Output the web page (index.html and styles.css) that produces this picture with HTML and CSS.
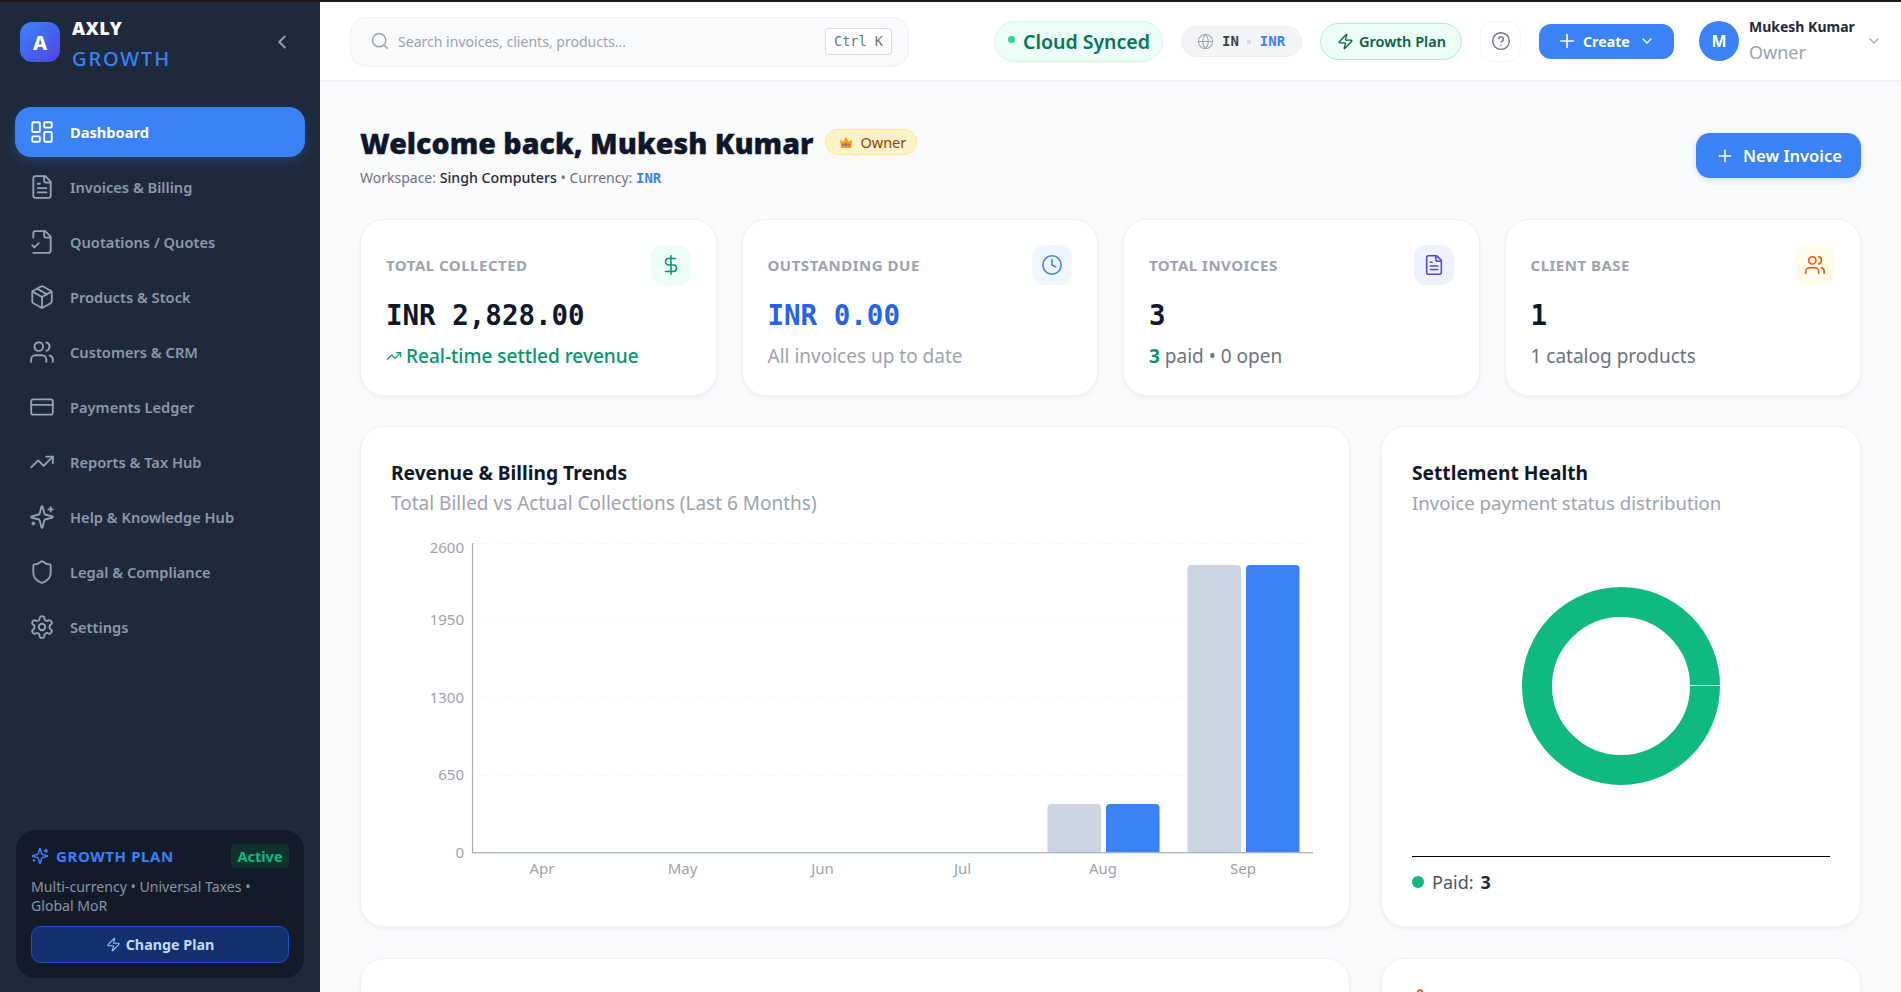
FILE: index.html
```html
<!DOCTYPE html>
<html lang="en">
<head>
<meta charset="utf-8">
<title>Axly Growth Dashboard</title>
<link rel="stylesheet" href="styles.css">
</head>
<body>
<svg class="sprite" aria-hidden="true">
  <symbol id="i-dash" viewBox="0 0 24 24"><rect x="3" y="3" width="7" height="9" rx="1"/><rect x="14" y="3" width="7" height="5" rx="1"/><rect x="14" y="12" width="7" height="9" rx="1"/><rect x="3" y="16" width="7" height="5" rx="1"/></symbol>
  <symbol id="i-file" viewBox="0 0 24 24"><path d="M15 2H6a2 2 0 0 0-2 2v16a2 2 0 0 0 2 2h12a2 2 0 0 0 2-2V7Z"/><path d="M14 2v4a2 2 0 0 0 2 2h4"/><path d="M10 9H8"/><path d="M16 13H8"/><path d="M16 17H8"/></symbol>
  <symbol id="i-filecheck" viewBox="0 0 24 24"><path d="M4 22h14a2 2 0 0 0 2-2V7l-5-5H6a2 2 0 0 0-2 2v4"/><path d="M14 2v4a2 2 0 0 0 2 2h4"/><path d="m3 15 2 2 4-4"/></symbol>
  <symbol id="i-package" viewBox="0 0 24 24"><path d="M11 21.73a2 2 0 0 0 2 0l7-4A2 2 0 0 0 21 16V8a2 2 0 0 0-1-1.73l-7-4a2 2 0 0 0-2 0l-7 4A2 2 0 0 0 3 8v8a2 2 0 0 0 1 1.73z"/><path d="M12 22V12"/><polyline points="3.29 7 12 12 20.71 7"/><path d="m7.5 4.27 9 5.15"/></symbol>
  <symbol id="i-users" viewBox="0 0 24 24"><path d="M16 21v-2a4 4 0 0 0-4-4H6a4 4 0 0 0-4 4v2"/><circle cx="9" cy="7" r="4"/><path d="M22 21v-2a4 4 0 0 0-3-3.87"/><path d="M16 3.13a4 4 0 0 1 0 7.75"/></symbol>
  <symbol id="i-card" viewBox="0 0 24 24"><rect width="20" height="14" x="2" y="5" rx="2"/><line x1="2" x2="22" y1="10" y2="10"/></symbol>
  <symbol id="i-trend" viewBox="0 0 24 24"><polyline points="22 7 13.5 15.5 8.5 10.5 2 17"/><polyline points="16 7 22 7 22 13"/></symbol>
  <symbol id="i-sparkles" viewBox="0 0 24 24"><path d="M9.937 15.5A2 2 0 0 0 8.5 14.063l-6.135-1.582a.5.5 0 0 1 0-.962L8.5 9.936A2 2 0 0 0 9.937 8.5l1.582-6.135a.5.5 0 0 1 .963 0L14.063 8.5A2 2 0 0 0 15.5 9.937l6.135 1.581a.5.5 0 0 1 0 .964L15.5 14.063a2 2 0 0 0-1.437 1.437l-1.582 6.135a.5.5 0 0 1-.963 0z"/><path d="M20 3v4"/><path d="M22 5h-4"/><path d="M4 17v2"/><path d="M5 18H3"/></symbol>
  <symbol id="i-shield" viewBox="0 0 24 24"><path d="M20 13c0 5-3.5 7.5-7.66 8.95a1 1 0 0 1-.67-.01C7.5 20.5 4 18 4 13V6a1 1 0 0 1 1-1c2 0 4.5-1.2 6.24-2.72a1.17 1.17 0 0 1 1.52 0C14.51 3.81 17 5 19 5a1 1 0 0 1 1 1z"/></symbol>
  <symbol id="i-gear" viewBox="0 0 24 24"><path d="M12.22 2h-.44a2 2 0 0 0-2 2v.18a2 2 0 0 1-1 1.73l-.43.25a2 2 0 0 1-2 0l-.15-.08a2 2 0 0 0-2.73.73l-.22.38a2 2 0 0 0 .73 2.73l.15.1a2 2 0 0 1 1 1.72v.51a2 2 0 0 1-1 1.74l-.15.09a2 2 0 0 0-.73 2.73l.22.38a2 2 0 0 0 2.73.73l.15-.08a2 2 0 0 1 2 0l.43.25a2 2 0 0 1 1 1.73V20a2 2 0 0 0 2 2h.44a2 2 0 0 0 2-2v-.18a2 2 0 0 1 1-1.73l.43-.25a2 2 0 0 1 2 0l.15.08a2 2 0 0 0 2.73-.73l.22-.39a2 2 0 0 0-.73-2.73l-.15-.08a2 2 0 0 1-1-1.74v-.5a2 2 0 0 1 1-1.74l.15-.09a2 2 0 0 0 .73-2.73l-.22-.38a2 2 0 0 0-2.73-.73l-.15.08a2 2 0 0 1-2 0l-.43-.25a2 2 0 0 1-1-1.73V4a2 2 0 0 0-2-2z"/><circle cx="12" cy="12" r="3"/></symbol>
  <symbol id="i-zap" viewBox="0 0 24 24"><path d="M4 14a1 1 0 0 1-.78-1.63l9.9-10.2a.5.5 0 0 1 .86.46l-1.92 6.02A1 1 0 0 0 13 10h7a1 1 0 0 1 .78 1.63l-9.9 10.2a.5.5 0 0 1-.86-.46l1.92-6.02A1 1 0 0 0 11 14z"/></symbol>
  <symbol id="i-search" viewBox="0 0 24 24"><circle cx="11" cy="11" r="8"/><path d="m21 21-4.3-4.3"/></symbol>
  <symbol id="i-globe" viewBox="0 0 24 24"><circle cx="12" cy="12" r="10"/><path d="M12 2a14.5 14.5 0 0 0 0 20 14.5 14.5 0 0 0 0-20"/><path d="M2 12h20"/></symbol>
  <symbol id="i-help" viewBox="0 0 24 24"><circle cx="12" cy="12" r="10"/><path d="M9.09 9a3 3 0 0 1 5.83 1c0 2-3 3-3 3"/><path d="M12 17h.01"/></symbol>
  <symbol id="i-plus" viewBox="0 0 24 24"><path d="M5 12h14"/><path d="M12 5v14"/></symbol>
  <symbol id="i-down" viewBox="0 0 24 24"><path d="m6 9 6 6 6-6"/></symbol>
  <symbol id="i-left" viewBox="0 0 24 24"><path d="m15 18-6-6 6-6"/></symbol>
  <symbol id="i-clock" viewBox="0 0 24 24"><circle cx="12" cy="12" r="10"/><polyline points="12 6 12 12 16 14"/></symbol>
  <symbol id="i-dollar" viewBox="0 0 24 24"><line x1="12" x2="12" y1="2" y2="22"/><path d="M17 5H9.5a3.5 3.5 0 0 0 0 7h5a3.5 3.5 0 0 1 0 7H6"/></symbol>
  <symbol id="i-alert" viewBox="0 0 24 24"><path d="m21.73 18-8-14a2 2 0 0 0-3.48 0l-8 14A2 2 0 0 0 4 21h16a2 2 0 0 0 1.73-3"/><path d="M12 9v4"/><path d="M12 17h.01"/></symbol>
</svg>

<div class="strip"></div>
<div class="app">
  <aside class="sidebar">
    <div class="brand">
      <div class="logo">A</div>
      <div class="brand-text">
        <div class="brand-name">AXLY</div>
        <div class="brand-sub">GROWTH</div>
      </div>
      <svg class="ic collapse"><use href="#i-left"/></svg>
    </div>
    <nav class="nav">
      <a class="nav-item active"><svg class="ic nav-ic"><use href="#i-dash"/></svg>Dashboard</a>
      <a class="nav-item"><svg class="ic nav-ic"><use href="#i-file"/></svg>Invoices &amp; Billing</a>
      <a class="nav-item"><svg class="ic nav-ic"><use href="#i-filecheck"/></svg>Quotations / Quotes</a>
      <a class="nav-item"><svg class="ic nav-ic"><use href="#i-package"/></svg>Products &amp; Stock</a>
      <a class="nav-item"><svg class="ic nav-ic"><use href="#i-users"/></svg>Customers &amp; CRM</a>
      <a class="nav-item"><svg class="ic nav-ic"><use href="#i-card"/></svg>Payments Ledger</a>
      <a class="nav-item"><svg class="ic nav-ic"><use href="#i-trend"/></svg>Reports &amp; Tax Hub</a>
      <a class="nav-item"><svg class="ic nav-ic"><use href="#i-sparkles"/></svg>Help &amp; Knowledge Hub</a>
      <a class="nav-item"><svg class="ic nav-ic"><use href="#i-shield"/></svg>Legal &amp; Compliance</a>
      <a class="nav-item"><svg class="ic nav-ic"><use href="#i-gear"/></svg>Settings</a>
    </nav>
    <div class="plan">
      <div class="plan-head">
        <svg class="ic plan-ic"><use href="#i-sparkles"/></svg>
        <span class="plan-title">GROWTH PLAN</span>
        <span class="plan-badge">Active</span>
      </div>
      <p class="plan-desc">Multi-currency • Universal Taxes • Global MoR</p>
      <button class="plan-btn"><svg class="ic plan-btn-ic"><use href="#i-zap"/></svg>Change Plan</button>
    </div>
  </aside>

  <div class="content">
    <header class="topbar">
      <div class="search">
        <svg class="ic search-ic"><use href="#i-search"/></svg>
        <span class="search-text">Search invoices, clients, products...</span>
        <kbd class="kbd">Ctrl K</kbd>
      </div>
      <div class="pill sync"><span class="sync-dot"></span>Cloud Synced</div>
      <div class="pill locale"><svg class="ic locale-ic"><use href="#i-globe"/></svg><span class="locale-in">IN</span><span class="locale-dot"></span><span class="locale-cur">INR</span></div>
      <div class="pill gplan"><svg class="ic gplan-ic"><use href="#i-zap"/></svg>Growth Plan</div>
      <div class="help"><svg class="ic help-ic"><use href="#i-help"/></svg></div>
      <button class="create"><svg class="ic create-plus"><use href="#i-plus"/></svg>Create<svg class="ic create-down"><use href="#i-down"/></svg></button>
      <div class="user">
        <div class="avatar">M</div>
        <div class="user-text">
          <div class="user-name">Mukesh Kumar</div>
          <div class="user-role">Owner</div>
        </div>
        <svg class="ic user-down"><use href="#i-down"/></svg>
      </div>
    </header>

    <main class="main">
      <section class="welcome">
        <div class="welcome-left">
          <div class="welcome-row">
            <h1 class="welcome-title">Welcome back, Mukesh Kumar</h1>
            <span class="owner-badge">
              <svg class="crown" viewBox="0 0 16 16"><path class="crown-base" d="M2 5l3 3 3-5 3 5 3-3-1 9H3z"/><circle class="crown-gem-a" cx="8" cy="10.5" r="1.6"/><circle class="crown-gem-b" cx="4.8" cy="11" r="1"/><circle class="crown-gem-b" cx="11.2" cy="11" r="1"/></svg>
              Owner
            </span>
          </div>
          <p class="welcome-sub">Workspace: <b class="ws">Singh Computers</b> • Currency: <b class="cur">INR</b></p>
        </div>
        <button class="new-invoice"><svg class="ic new-plus"><use href="#i-plus"/></svg>New Invoice</button>
      </section>

      <section class="stats">
        <article class="card stat">
          <div class="stat-top"><span class="stat-label">TOTAL COLLECTED</span><span class="stat-icon tint-green"><svg class="ic"><use href="#i-dollar"/></svg></span></div>
          <div class="stat-value">INR 2,828.00</div>
          <div class="stat-sub green"><svg class="ic trend-ic"><use href="#i-trend"/></svg>Real-time settled revenue</div>
        </article>
        <article class="card stat">
          <div class="stat-top"><span class="stat-label">OUTSTANDING DUE</span><span class="stat-icon tint-blue"><svg class="ic"><use href="#i-clock"/></svg></span></div>
          <div class="stat-value blue">INR 0.00</div>
          <div class="stat-sub muted">All invoices up to date</div>
        </article>
        <article class="card stat">
          <div class="stat-top"><span class="stat-label">TOTAL INVOICES</span><span class="stat-icon tint-indigo"><svg class="ic"><use href="#i-file"/></svg></span></div>
          <div class="stat-value">3</div>
          <div class="stat-sub"><b class="paid-n">3</b> paid • 0 open</div>
        </article>
        <article class="card stat">
          <div class="stat-top"><span class="stat-label">CLIENT BASE</span><span class="stat-icon tint-orange"><svg class="ic"><use href="#i-users"/></svg></span></div>
          <div class="stat-value">1</div>
          <div class="stat-sub">1 catalog products</div>
        </article>
      </section>

      <section class="charts">
        <article class="card panel">
          <h2 class="panel-title">Revenue &amp; Billing Trends</h2>
          <p class="panel-sub">Total Billed vs Actual Collections (Last 6 Months)</p>
          <svg class="chart" viewBox="391 530 930 360">
            <g class="grid">
              <line x1="473" x2="1313" y1="543.5" y2="543.5"/>
              <line x1="473" x2="1313" y1="620.8" y2="620.8"/>
              <line x1="473" x2="1313" y1="698" y2="698"/>
              <line x1="473" x2="1313" y1="775.4" y2="775.4"/>
            </g>
            <g class="ylab">
              <text x="464" y="553">2600</text>
              <text x="464" y="625">1950</text>
              <text x="464" y="703">1300</text>
              <text x="464" y="780">650</text>
              <text x="464" y="858">0</text>
            </g>
            <g class="xlab">
              <text x="542" y="874">Apr</text>
              <text x="682.5" y="874">May</text>
              <text x="822.5" y="874">Jun</text>
              <text x="962.5" y="874">Jul</text>
              <text x="1103" y="874">Aug</text>
              <text x="1243" y="874">Sep</text>
            </g>
            <path class="bar-grey" d="M1047.5 853V808a4 4 0 0 1 4-4H1097a4 4 0 0 1 4 4V853z"/>
            <path class="bar-blue" d="M1106 853V808a4 4 0 0 1 4-4H1155.5a4 4 0 0 1 4 4V853z"/>
            <path class="bar-grey" d="M1187.5 853V569a4 4 0 0 1 4-4H1237a4 4 0 0 1 4 4V853z"/>
            <path class="bar-blue" d="M1246 853V569a4 4 0 0 1 4-4H1295.5a4 4 0 0 1 4 4V853z"/>
            <path class="axis" d="M472.5 543V852.7H1313"/>
          </svg>
        </article>
        <article class="card panel health">
          <h2 class="panel-title">Settlement Health</h2>
          <p class="panel-sub">Invoice payment status distribution</p>
          <div class="donut-wrap">
            <svg class="donut" viewBox="0 0 200 200">
              <circle class="donut-ring" cx="100" cy="100" r="84"/>
              <line class="donut-gap" x1="169" x2="199" y1="99.5" y2="99.5"/>
            </svg>
          </div>
          <div class="legend"><span class="legend-dot"></span>Paid:<b class="legend-n">3</b></div>
        </article>
      </section>

      <section class="charts lower">
        <article class="card panel"></article>
        <article class="card panel"><svg class="ic alert-ic"><use href="#i-alert"/></svg></article>
      </section>
    </main>
  </div>
</div>
</body>
</html>
```

FILE: styles.css
```css
* { box-sizing: border-box; }
html, body { margin: 0; height: 100%; overflow: hidden; }
body { font-family: "Noto Sans", "Open Sans", sans-serif; background: #f8fafc; color: #0f172a; }
.sprite { display: none; }
.ic { display: block; flex: none; width: 24px; height: 24px; fill: none; stroke: currentColor; stroke-width: 2; stroke-linecap: round; stroke-linejoin: round; }
.strip { height: 2px; background: #1c1c1c; }
.app { display: flex; height: 990px; }

/* sidebar */
.sidebar { width: 320px; flex: none; background: #1e293b; display: flex; flex-direction: column; }
.brand { display: flex; align-items: center; height: 80px; padding: 0 27px 0 20px; }
.logo { width: 40px; height: 40px; border-radius: 12px; background: linear-gradient(135deg, #3b82f6, #4f46e5); color: #fff; font-weight: 800; font-size: 20px; display: flex; align-items: center; justify-content: center; }
.brand-text { margin-left: 12px; flex: 1; padding-top: 5px; }
.brand-name { color: #fff; font-size: 18px; font-weight: 900; line-height: 24px; letter-spacing: .6px; }
.brand-sub { color: #3b82f6; font-size: 20px; font-weight: 500; line-height: 28px; letter-spacing: 1.9px; margin-top: 5px; }
.collapse { width: 22px; height: 22px; color: #94a3b8; }
.nav { padding: 25px 15px 0; display: flex; flex-direction: column; gap: 5px; }
.nav-item { height: 50px; display: flex; align-items: center; gap: 15px; padding-left: 14px; color: #8d99ab; font-size: 14.65px; font-weight: 600; border-radius: 16px; }
.nav-ic { width: 26px; height: 26px; stroke-width: 1.7; color: #94a3b8; }
.active { background: #3b82f6; color: #fff; box-shadow: 0 4px 12px rgba(59, 130, 246, .25); font-weight: 700; }
.active .nav-ic { color: #fff; }
.plan { margin: auto 16px 14px; height: 148px; background: #131b2b; border-radius: 20px; padding: 14px 15px 0; }
.plan-head { display: flex; align-items: center; height: 24px; }
.plan-ic { width: 18px; height: 18px; color: #3b82f6; }
.plan-title { margin-left: 7px; flex: 1; color: #3b82f6; font-size: 15px; font-weight: 700; letter-spacing: .6px; }
.plan-badge { height: 24px; width: 58px; background: #10322f; color: #10b981; font-size: 14.5px; font-weight: 700; border-radius: 4px; display: flex; align-items: center; justify-content: center; }
.plan-desc { margin: 9px 0 0; color: #8a94a4; font-size: 14.1px; line-height: 19px; }
.plan-btn { margin-top: 11px; width: 100%; height: 37px; background: #14306e; border: 1px solid #1d4ed8; border-radius: 10px; color: #bfdbfe; font: 700 14.3px "Noto Sans", sans-serif; display: flex; align-items: center; justify-content: center; gap: 5px; padding: 0; }
.plan-btn-ic { width: 15px; height: 15px; stroke-width: 1.8; color: #93c5fd; }

/* topbar */
.content { flex: 1; min-width: 0; display: flex; flex-direction: column; }
.topbar { height: 80px; flex: none; background: #fff; border-bottom: 2px solid #eef0f3; display: flex; align-items: center; padding: 0 19px 0 30px; }
.search { width: 560px; height: 49px; background: #f8fafc; border: 1px solid #eef1f5; border-radius: 16px; box-shadow: 0 1px 2px rgba(0, 0, 0, .04); display: flex; align-items: center; padding: 0 16px 0 19px; margin-right: 85px; }
.search-ic { width: 20px; height: 20px; color: #9ca3af; stroke-width: 1.8; }
.search-text { margin-left: 8px; flex: 1; color: #9ca3af; font-size: 14.05px; }
.kbd { width: 67px; height: 27px; background: #fff; border: 1px solid #d8dce2; border-radius: 4px; font: 13.5px "DejaVu Sans Mono", monospace; color: #6b7280; display: flex; align-items: center; justify-content: center; }
.pill { display: flex; align-items: center; border-radius: 999px; flex: none; }
.sync { width: 169px; height: 41px; background: #ecfdf5; border: 1px solid #d1fae5; color: #047857; font-size: 19.5px; font-weight: 600; padding-left: 13px; margin-right: 18px; }
.sync-dot { width: 7px; height: 7px; border-radius: 50%; background: #34d399; margin-right: 8px; margin-top: -3px; }
.locale { width: 121px; height: 31px; background: #f3f4f6; border: 1px solid #eceef1; padding-left: 15px; font: 700 14px "DejaVu Sans Mono", monospace; margin-right: 18px; }
.locale-ic { width: 17px; height: 17px; stroke-width: 1.5; color: #9ca3af; }
.locale-in { margin-left: 8px; color: #374151; }
.locale-dot { width: 4px; height: 4px; background: #d8dbe0; margin: 1px 9px 0 8px; }
.locale-cur { color: #3b82f6; }
.gplan { width: 142px; height: 37px; background: #ecfdf5; border: 1px solid #a7f3d0; color: #065f46; font-size: 14.5px; font-weight: 600; padding-left: 16px; gap: 5px; margin-right: 18px; }
.gplan-ic { width: 17px; height: 17px; stroke-width: 1.8; }
.help { width: 41px; height: 41px; background: #fff; border: 1px solid #f3f4f6; border-radius: 14px; display: flex; align-items: center; justify-content: center; color: #6b7280; margin-right: 18px; flex: none; }
.help-ic { width: 20px; height: 20px; stroke-width: 1.7; }
.create { width: 135px; height: 35px; background: #3b82f6; border: 0; border-radius: 12px; color: #fff; font: 700 14.2px "Noto Sans", sans-serif; display: flex; align-items: center; padding: 0 0 0 17px; margin-right: 25px; flex: none; }
.create-plus { width: 22px; height: 22px; margin-right: 5px; stroke-width: 1.8; }
.create-down { width: 16px; height: 16px; margin-left: 9px; stroke-width: 1.8; }
.user { display: flex; align-items: center; flex: none; }
.avatar { width: 40px; height: 40px; border-radius: 50%; background: #3b82f6; color: #fff; font-weight: 700; font-size: 16px; display: flex; align-items: center; justify-content: center; }
.user-text { margin-left: 10px; width: 116px; }
.user-name { font-size: 14px; font-weight: 700; color: #1f2937; line-height: 20px; margin-top: -1px; }
.user-role { font-size: 18px; color: #9ca3af; line-height: 26px; margin-top: 2px; }
.user-down { width: 16px; height: 16px; color: #9ca3af; margin-left: 1px; stroke-width: 1.8; }

/* main */
.main { flex: 1; min-height: 0; overflow: hidden; padding: 46px 40px 0; }
.welcome { display: flex; justify-content: space-between; height: 91px; }
.welcome-row { display: flex; align-items: center; gap: 12px; height: 32px; margin-top: -1px; }
.welcome-title { margin: 0; font-size: 28.6px; font-weight: 900; line-height: 32px; white-space: nowrap; -webkit-text-stroke: .3px #0f172a; }
.owner-badge { height: 26px; padding: 0 10px 0 12px; background: #fef3c7; border: 1px solid #fde68a; border-radius: 999px; color: #92400e; font-size: 14.5px; display: flex; align-items: center; gap: 6px; margin-top: -2px; }
.crown { width: 16px; height: 16px; }
.crown-base { fill: #f59e0b; }
.crown-gem-a { fill: #6366f1; }
.crown-gem-b { fill: #ef4444; }
.welcome-sub { margin: 9px 0 0; font-size: 14px; color: #6b7280; line-height: 20px; }
.ws { font-weight: 500; font-size: 14.2px; color: #1e293b; }
.cur { font: 700 14px "DejaVu Sans Mono", monospace; color: #3b82f6; }
.new-invoice { width: 165px; height: 45px; margin-top: 5px; background: #3b82f6; border: 0; border-radius: 14px; color: #fff; font: 600 16.5px "Noto Sans", sans-serif; display: flex; align-items: center; padding: 0 0 0 19px; gap: 8px; box-shadow: 0 2px 6px rgba(59, 130, 246, .2); }
.new-plus { width: 20px; height: 20px; stroke-width: 1.8; }

.card { background: #fff; border: 1px solid #eef1f5; border-radius: 24px; box-shadow: 0 2px 4px rgba(15, 23, 42, .05); }
.stats { display: grid; grid-template-columns: repeat(4, 1fr); gap: 25px; }
.stat { height: 177px; padding: 25px 25px 0; }
.stat-top { display: flex; justify-content: space-between; align-items: center; height: 40px; }
.stat-label { font-size: 15px; font-weight: 700; color: #9ca3af; letter-spacing: .5px; }
.stat-icon { width: 40px; height: 40px; border-radius: 12px; display: flex; align-items: center; justify-content: center; }
.tint-green { background: #ecfdf5; color: #059669; }
.tint-blue { background: #eff6ff; color: #3b82f6; }
.tint-indigo { background: #eef2ff; color: #4f46e5; }
.tint-orange { background: #fffbeb; color: #ea580c; }
.stat-icon .ic { width: 22px; height: 22px; stroke-width: 1.7; }
.stat-value { margin-top: 13px; font: 700 27.5px/34px "DejaVu Sans Mono", monospace; color: #0f172a; }
.blue { color: #2563eb; }
.stat-sub { margin-top: 11px; font-size: 19px; line-height: 26px; color: #6b7280; display: flex; align-items: center; white-space: pre; }
.green { color: #059669; font-weight: 500; }
.muted { color: #9ca3af; }
.paid-n { color: #059669; font-weight: 700; }
.trend-ic { width: 16px; height: 16px; margin-right: 4px; stroke-width: 1.8; }

.charts { display: grid; grid-template-columns: minmax(0, 1fr) 480px; gap: 31px; margin-top: 30px; }
.panel { height: 501px; padding: 32px 30px 0; }
.panel-title { margin: 0; font-size: 19.2px; font-weight: 700; line-height: 28px; }
.panel-sub { margin: 2px 0 0; font-size: 19px; line-height: 28px; color: #9ca3af; }
.chart { display: block; width: 930px; height: 360px; margin-top: 13px; }
.grid line { stroke: #f3f5f8; stroke-dasharray: 3 3; }
.ylab text { fill: #9ca3af; font-size: 15px; text-anchor: end; }
.xlab text { fill: #9ca3af; font-size: 15px; text-anchor: middle; }
.bar-grey { fill: #cbd5e1; }
.bar-blue { fill: #3b82f6; }
.axis { fill: none; stroke: #a3aec4; stroke-width: 1.2; }
.health { display: flex; flex-direction: column; }
.health .panel-sub { font-size: 18.6px; }
.donut-wrap { height: 341px; margin-top: -2px; display: flex; align-items: center; justify-content: center; flex: none; }
.donut { width: 200px; height: 200px; }
.donut-ring { fill: none; stroke: #10b981; stroke-width: 30; }
.donut-gap { stroke: #d5f3e8; stroke-width: 1; }
.legend { border-top: 1px solid #000; padding-top: 11px; display: flex; align-items: center; font-size: 18px; line-height: 28px; color: #475569; }
.legend-dot { width: 12px; height: 12px; border-radius: 50%; background: #10b981; margin-right: 8px; }
.legend-n { margin-left: 7px; color: #1e293b; font-weight: 700; }
.lower { margin-top: 31px; }
.lower .panel { height: 300px; padding-top: 28px; padding-left: 26px; }
.alert-ic { width: 24px; height: 24px; color: #ea580c; stroke-width: 2; }
```
